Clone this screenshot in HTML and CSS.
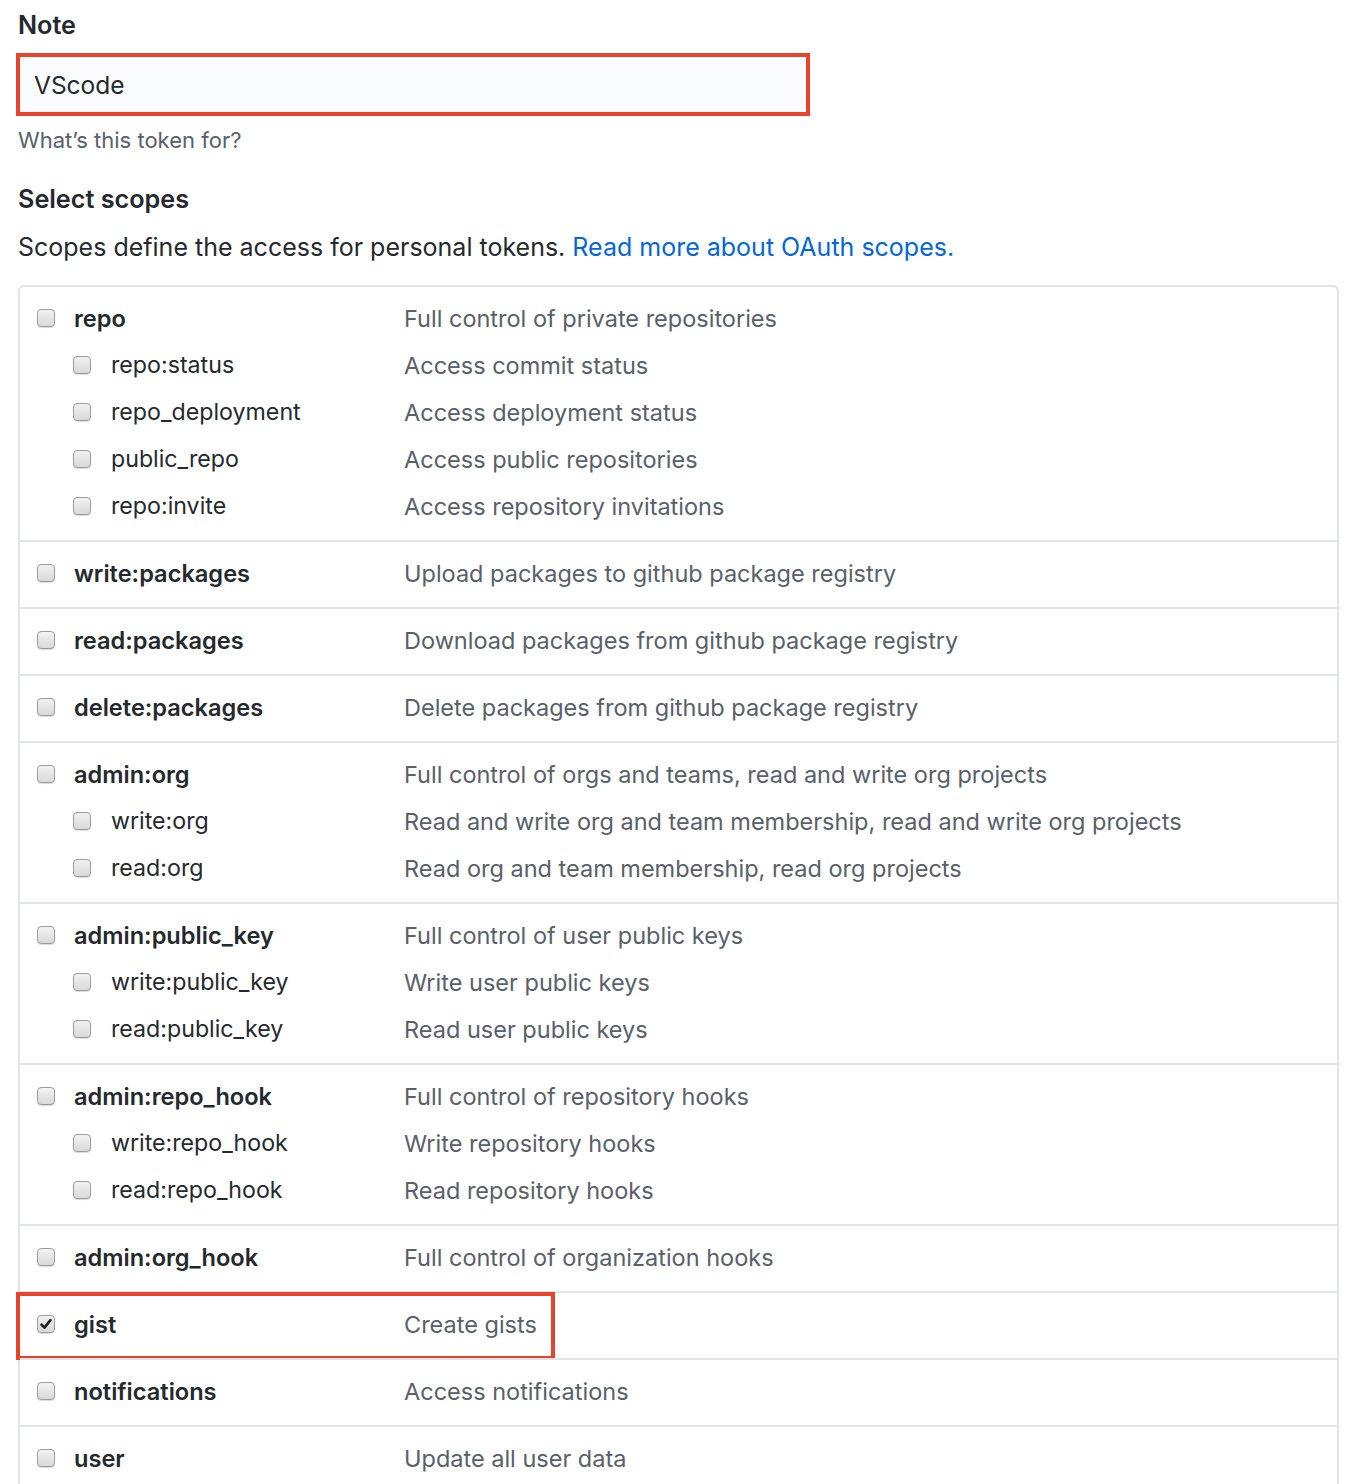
FILE: index.html
```html
<!DOCTYPE html>
<html lang="en">
<head>
<meta charset="utf-8">
<title>New personal access token</title>
<link rel="stylesheet" href="styles.css">
</head>
<body>
<div class="page">
  <div class="label">Note</div>
  <div class="note-input">VScode</div>
  <div class="hint">What’s this token for?</div>
  <div class="label scopes-title">Select scopes</div>
  <p class="intro">Scopes define the access for personal tokens. <a href="#" class="link">Read more about OAuth scopes.</a></p>

  <div class="scopes">
    <div class="group">
      <div class="row"><div class="name"><span class="cb"></span><b>repo</b></div><div class="desc">Full control of private repositories</div></div>
      <div class="row sub"><div class="name"><span class="cb"></span>repo:status</div><div class="desc">Access commit status</div></div>
      <div class="row sub"><div class="name"><span class="cb"></span>repo_deployment</div><div class="desc">Access deployment status</div></div>
      <div class="row sub"><div class="name"><span class="cb"></span>public_repo</div><div class="desc">Access public repositories</div></div>
      <div class="row sub"><div class="name"><span class="cb"></span>repo:invite</div><div class="desc">Access repository invitations</div></div>
    </div>
    <div class="group">
      <div class="row"><div class="name"><span class="cb"></span><b>write:packages</b></div><div class="desc">Upload packages to github package registry</div></div>
    </div>
    <div class="group">
      <div class="row"><div class="name"><span class="cb"></span><b>read:packages</b></div><div class="desc">Download packages from github package registry</div></div>
    </div>
    <div class="group">
      <div class="row"><div class="name"><span class="cb"></span><b>delete:packages</b></div><div class="desc">Delete packages from github package registry</div></div>
    </div>
    <div class="group">
      <div class="row"><div class="name"><span class="cb"></span><b>admin:org</b></div><div class="desc">Full control of orgs and teams, read and write org projects</div></div>
      <div class="row sub"><div class="name"><span class="cb"></span>write:org</div><div class="desc">Read and write org and team membership, read and write org projects</div></div>
      <div class="row sub"><div class="name"><span class="cb"></span>read:org</div><div class="desc">Read org and team membership, read org projects</div></div>
    </div>
    <div class="group">
      <div class="row"><div class="name"><span class="cb"></span><b>admin:public_key</b></div><div class="desc">Full control of user public keys</div></div>
      <div class="row sub"><div class="name"><span class="cb"></span>write:public_key</div><div class="desc">Write user public keys</div></div>
      <div class="row sub"><div class="name"><span class="cb"></span>read:public_key</div><div class="desc">Read user public keys</div></div>
    </div>
    <div class="group">
      <div class="row"><div class="name"><span class="cb"></span><b>admin:repo_hook</b></div><div class="desc">Full control of repository hooks</div></div>
      <div class="row sub"><div class="name"><span class="cb"></span>write:repo_hook</div><div class="desc">Write repository hooks</div></div>
      <div class="row sub"><div class="name"><span class="cb"></span>read:repo_hook</div><div class="desc">Read repository hooks</div></div>
    </div>
    <div class="group">
      <div class="row"><div class="name"><span class="cb"></span><b>admin:org_hook</b></div><div class="desc">Full control of organization hooks</div></div>
    </div>
    <div class="group highlighted">
      <div class="row"><div class="name"><span class="cb checked"><svg viewBox="0 0 18 18" width="18" height="18"><path d="M4 9.8 L7.3 13 L14 4.6" fill="none" stroke="#1f1f1f" stroke-width="3" stroke-linecap="round" stroke-linejoin="round"/></svg></span><b>gist</b></div><div class="desc">Create gists</div></div>
      <div class="mark"></div>
    </div>
    <div class="group">
      <div class="row"><div class="name"><span class="cb"></span><b>notifications</b></div><div class="desc">Access notifications</div></div>
    </div>
    <div class="group">
      <div class="row"><div class="name"><span class="cb"></span><b>user</b></div><div class="desc">Update all user data</div></div>
    </div>
  </div>
</div>
</body>
</html>
```
FILE: styles.css
```css
html, body {
  margin: 0;
  padding: 0;
  background: #ffffff;
}
body {
  font-family: Inter, "Liberation Sans", sans-serif;
  color: #24292e;
  font-size: 24px;
}
.page {
  padding: 7px 0 0 18px;
  width: 1321px;
}
.label {
  font-weight: 600;
  font-size: 25.2px;
  line-height: 36px;
}
.note-input {
  margin: 10px 0 0 -2px;
  width: 794px;
  height: 63px;
  box-sizing: border-box;
  border: 4px solid #e8432b;
  background: #fafbfc;
  padding: 0 14px;
  font-size: 24.5px;
  line-height: 56px;
  color: #24292e;
}
.hint {
  margin-top: 9px;
  font-size: 22px;
  line-height: 30px;
  color: #586069;
}
.scopes-title {
  margin-top: 26px;
}
.intro {
  margin: 12px 0 0;
  font-size: 25px;
  line-height: 36px;
}
.link {
  color: #0366d6;
  text-decoration: none;
}
.scopes {
  margin-top: 20px;
  border: 2px solid #e1e4e8;
  border-radius: 6px;
}
.group {
  position: relative;
  padding: 13px 0 16px;
  display: flex;
  flex-direction: column;
  gap: 11px;
}
.group + .group {
  border-top: 2px solid #e1e4e8;
}
.row {
  display: flex;
  align-items: center;
  height: 36px;
}
.name {
  flex: none;
  width: 384px;
  box-sizing: border-box;
  padding-left: 17px;
  display: flex;
  align-items: center;
  gap: 19px;
  white-space: nowrap;
  font-size: 23.6px;
}
.name b {
  font-weight: 600;
}
.sub .name {
  padding-left: 53px;
  gap: 20px;
  font-size: 23.2px;
}
.desc {
  color: #586069;
  white-space: nowrap;
  font-size: 23.5px;
}
.cb {
  flex: none;
  width: 18px;
  height: 18px;
  box-sizing: border-box;
  border: 1px solid #9c9c9c;
  border-radius: 4px;
  background: linear-gradient(#f2f2f2, #d9d9d9);
  box-shadow: 0 1px 1px rgba(0,0,0,0.15);
  display: flex;
  align-items: center;
  justify-content: center;
}
.cb svg {
  display: block;
}
.mark {
  position: absolute;
  left: -4px;
  top: -1px;
  width: 539px;
  height: 68px;
  box-sizing: border-box;
  border: 4px solid #e8432b;
  pointer-events: none;
}
```
